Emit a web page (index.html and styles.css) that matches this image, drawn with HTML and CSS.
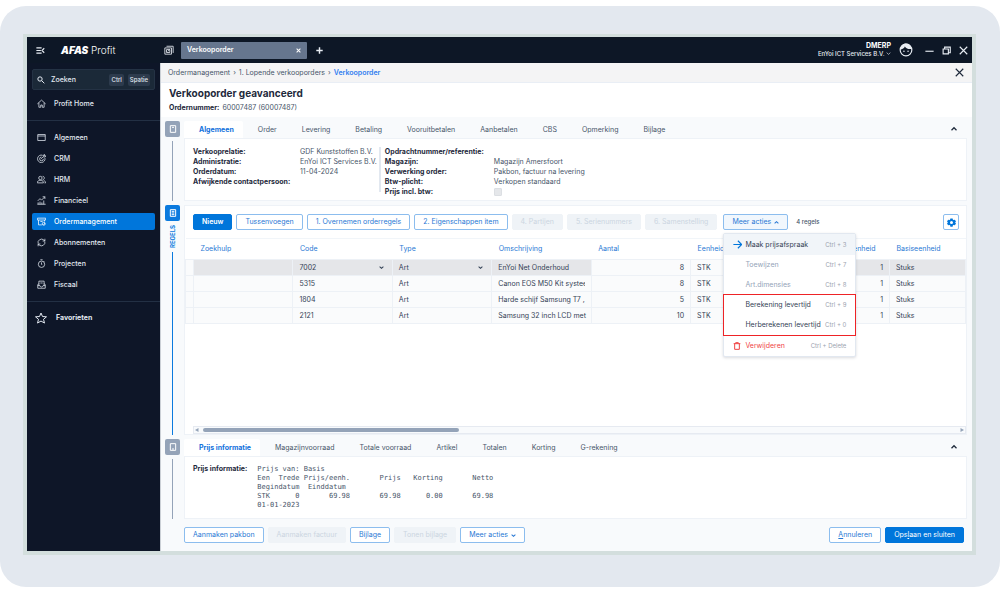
FILE: index.html
```html
<!DOCTYPE html>
<html lang="nl">
<head>
<meta charset="utf-8">
<meta name="viewport" content="width=device-width, initial-scale=1">
<title>AFAS Profit - Verkooporder</title>
<link rel="stylesheet" href="styles.css">
</head>
<body>
<div class="backdrop">
<div class="window">
  <header class="titlebar">
    <div class="brand">
      <button class="icon-btn" aria-label="Menu inklappen"><svg class="icon" viewBox="0 0 24 24"><path class="bold" d="M1 5h14M1 12h12M1 19h14M22 6l-6 6 6 6"/></svg></button>
      <span class="logo"><b>AFAS</b> Profit</span>
    </div>
    <button class="icon-btn pages" aria-label="Vensters"><svg class="icon icon-10" viewBox="0 0 24 24"><path d="M6 3h16v16M2 7h16v15H2zM6 11h8v7H6zM9 15l5-4"/></svg></button>
    <div class="doc-tab"><span>Verkooporder</span><button class="icon-btn" aria-label="Tabblad sluiten"><svg class="icon icon-5" viewBox="0 0 24 24"><path class="thick" d="M3 3l18 18M21 3L3 21"/></svg></button></div>
    <button class="icon-btn add" aria-label="Nieuw tabblad"><svg class="icon icon-7" viewBox="0 0 24 24"><path class="thick" d="M12 1v22M1 12h22"/></svg></button>
    <div class="account">
      <b>DMERP</b>
      <span>EnYoi ICT Services B.V. <svg class="icon icon-5" viewBox="0 0 24 24"><path class="bold" d="M3 8l9 8 9-8"/></svg></span>
    </div>
    <svg class="icon face" viewBox="0 0 24 24"><circle cx="12" cy="12" r="10"/><path class="solid" d="M2 11c4 0 7-2 8-5 3 4 7 5 12 4C21 4 17 1 12 1S2 5 2 11z"/><circle class="solid" cx="8.500" cy="14" r="1.300"/><circle class="solid" cx="15.500" cy="14" r="1.300"/></svg>
    <div class="window-controls">
      <button class="icon-btn" aria-label="Minimaliseren"><svg class="icon" viewBox="0 0 24 24"><path class="bold" d="M1 14h22"/></svg></button>
      <button class="icon-btn" aria-label="Herstellen"><svg class="icon" viewBox="0 0 24 24"><path class="bold" d="M7 7V3h15v15h-5M3 8h14v13H3z"/></svg></button>
      <button class="icon-btn" aria-label="Sluiten"><svg class="icon" viewBox="0 0 24 24"><path class="bold" d="M2 2l20 20M22 2L2 22"/></svg></button>
    </div>
  </header>

  <div class="workspace">
  <nav class="sidebar">
    <button class="search"><svg class="icon icon-8" viewBox="0 0 24 24"><circle class="bold" cx="9" cy="9" r="6.500"/><path class="bold" d="M14 14l8 8"/></svg><span>Zoeken</span><kbd>Ctrl</kbd><kbd>Spatie</kbd></button>
    <a class="nav-item" href="#"><svg class="icon" viewBox="0 0 24 24"><path d="M1 13L12 3l11 10M5 10v12h5v-6h4v6h5V10"/></svg>Profit Home</a>
    <hr>
    <a class="nav-item" href="#"><svg class="icon" viewBox="0 0 24 24"><path d="M2 4h20v16H2zM2 8h20"/></svg>Algemeen</a>
    <a class="nav-item" href="#"><svg class="icon" viewBox="0 0 24 24"><path d="M15 3.500A10 10 0 1 0 21 10M12 8a5 5 0 1 0 5 5M11 13l6-6V3l3-2v4h4l-3 3h-4"/></svg>CRM</a>
    <a class="nav-item" href="#"><svg class="icon" viewBox="0 0 24 24"><circle cx="9" cy="8" r="4.500"/><path d="M1 21v-2c0-6 16-6 16 0v2zM15 3.500c6 0 6 9 0 9M18 15c4 1 5 3 5 6h-3"/></svg>HRM</a>
    <a class="nav-item" href="#"><svg class="icon" viewBox="0 0 24 24"><path d="M2 13l6-6 4 4 9-9M15 2h6v6M3 22v-5M8 22v-7M13 22v-5M18 22V12M1 22h22"/></svg>Financieel</a>
    <a class="nav-item active" href="#"><svg class="icon" viewBox="0 0 24 24"><path d="M1 3h22v5H1zM4 8v13h9M20 8v4M9 12h6"/><circle cx="18" cy="18" r="4"/><path d="M16 18l2 2 3-4"/></svg>Ordermanagement</a>
    <a class="nav-item" href="#"><svg class="icon" viewBox="0 0 24 24"><path d="M3 15a9.500 9.500 0 0 1 15-10l3 3M21 2v6h-6M21 9.500A9.500 9.500 0 0 1 6 19l-3-3M3 22v-6h6"/></svg>Abonnementen</a>
    <a class="nav-item" href="#"><svg class="icon" viewBox="0 0 24 24"><circle cx="12" cy="14" r="8.500"/><path d="M9 2h6M12 9v5l2 2M18 6l2 2"/></svg>Projecten</a>
    <a class="nav-item" href="#"><svg class="icon" viewBox="0 0 24 24"><path d="M5 9L2 13v9h20v-9l-3-4M5 15V3h14v12M2 15h6c0 5 8 5 8 0h6M9 8h6"/></svg>Fiscaal</a>
    <hr>
    <a class="nav-item favorites" href="#"><svg class="icon icon-12" viewBox="0 0 24 24"><path d="M12 2l3 7 8 .6-6 5 2 7.500-7-4-7 4 2-7.500-6-5L9 9z"/></svg>Favorieten</a>
  </nav>

  <main class="main">
    <div class="breadcrumb">
      <a href="#">Ordermanagement</a><span>›</span><a href="#">1. Lopende verkooporders</a><span>›</span><b>Verkooporder</b>
      <button class="icon-btn close" aria-label="Pagina sluiten"><svg class="icon" viewBox="0 0 24 24"><path class="bold" d="M2 2l20 20M22 2L2 22"/></svg></button>
    </div>
    <div class="page-head">
      <h1>Verkooporder geavanceerd</h1>
      <p><b>Ordernummer:</b> 60007487 (60007487)</p>
    </div>

    <div class="sections">
    <section class="section">
      <div class="rail"><span class="rail-icon"><svg class="icon icon-8" viewBox="0 0 24 24"><path class="bold" d="M4 2h16v20H4zM9 7h6"/></svg></span><i></i></div>
      <div class="content">
        <div class="tabs"><button class="active">Algemeen</button><button>Order</button><button>Levering</button><button>Betaling</button><button>Vooruitbetalen</button><button>Aanbetalen</button><button>CBS</button><button>Opmerking</button><button>Bijlage</button><button class="collapse" aria-label="Inklappen"><svg class="icon icon-6" viewBox="0 0 24 24"><path class="thick" d="M2 17l10-10 10 10"/></svg></button></div>
        <div class="panel details">
          <dl>
            <dt>Verkooprelatie:</dt><dd>GDF Kunststoffen B.V.</dd>
            <dt>Administratie:</dt><dd>EnYoi ICT Services B.V.</dd>
            <dt>Orderdatum:</dt><dd>11-04-2024</dd>
            <dt>Afwijkende contactpersoon:</dt><dd></dd>
          </dl>
          <dl class="second">
            <dt>Opdrachtnummer/referentie:</dt><dd></dd>
            <dt>Magazijn:</dt><dd>Magazijn Amersfoort</dd>
            <dt>Verwerking order:</dt><dd>Pakbon, factuur na levering</dd>
            <dt>Btw-plicht:</dt><dd>Verkopen standaard</dd>
            <dt><label for="btw">Prijs incl. btw:</label></dt><dd><input id="btw" type="checkbox" disabled></dd>
          </dl>
        </div>
      </div>
    </section>

    <section class="section grow blue">
      <div class="rail"><span class="rail-icon"><svg class="icon icon-8" viewBox="0 0 24 24"><path class="bold" d="M4 2h16v20H4zM8 7h8M8 12h8M8 17h8"/></svg></span><em>REGELS</em><i></i></div>
      <div class="content panel lines">
        <div class="toolbar">
          <button class="btn primary">Nieuw</button>
          <button class="btn">Tussenvoegen</button>
          <button class="btn">1. Overnemen orderregels</button>
          <button class="btn">2. Eigenschappen item</button>
          <button class="btn" disabled>4. Partijen</button>
          <button class="btn" disabled>5. Serienummers</button>
          <button class="btn" disabled>6. Samenstelling</button>
          <div class="dropdown">
            <button class="btn open" aria-expanded="true">Meer acties <svg class="icon icon-5" viewBox="0 0 24 24"><path class="thick" d="M3 16l9-8 9 8"/></svg></button>
            <div class="menu" role="menu">
              <button role="menuitem" class="current"><svg class="icon" viewBox="0 0 24 24"><path class="bold" d="M1 12h21M13 2l10 10-10 10"/></svg><span>Maak prijsafspraak</span><small>Ctrl + 3</small></button>
              <button role="menuitem" disabled><span>Toewijzen</span><small>Ctrl + 7</small></button>
              <button role="menuitem" disabled><span>Art.dimensies</span><small>Ctrl + 8</small></button>
              <div class="marked">
                <button role="menuitem"><span>Berekening levertijd</span><small>Ctrl + 9</small></button>
                <button role="menuitem"><span>Herberekenen levertijd</span><small>Ctrl + 0</small></button>
              </div>
              <button role="menuitem" class="danger"><svg class="icon icon-8" viewBox="0 0 24 24"><path class="bold" d="M2 5h20M8 4V2h8v2M5 5v17h14V5"/></svg><span>Verwijderen</span><small>Ctrl + Delete</small></button>
            </div>
          </div>
          <span class="count">4 regels</span>
          <button class="btn gear" aria-label="Instellingen"><svg class="icon" viewBox="0 0 24 24"><path class="solid" fill-rule="evenodd" d="M9 1h6l.8 3.400 2 1.200L21 4.500l3 5-2.500 2.500L24 14.500l-3 5-3.200-1.100-2 1.200L15 23H9l-.8-3.400-2-1.200L3 19.500l-3-5L2.500 12 0 9.500l3-5 3.200 1.100 2-1.200zM12 8a4 4 0 1 0 0 8 4 4 0 0 0 0-8z"/></svg></button>
        </div>
        <table>
          <colgroup><col class="c-gutter"><col span="7"><col class="c-last"></colgroup>
          <thead><tr><th></th><th>Zoekhulp</th><th>Code</th><th>Type</th><th>Omschrijving</th><th>Aantal</th><th>Eenheid</th><th class="end">Eenheid</th><th>Basiseenheid</th></tr></thead>
          <tbody>
            <tr class="selected"><td></td><td></td><td><div class="pick">7002<svg class="icon icon-5" viewBox="0 0 24 24"><path class="thick" d="M3 8l9 8 9-8"/></svg></div></td><td><div class="pick">Art<svg class="icon icon-5" viewBox="0 0 24 24"><path class="thick" d="M3 8l9 8 9-8"/></svg></div></td><td>EnYoi Net Onderhoud</td><td class="num plain">8</td><td class="plain">STK</td><td class="num">1</td><td>Stuks</td></tr>
            <tr><td></td><td></td><td>5315</td><td>Art</td><td><div class="clip">Canon EOS M50 Kit systeem</div></td><td class="num">8</td><td>STK</td><td class="num">1</td><td>Stuks</td></tr>
            <tr><td></td><td></td><td>1804</td><td>Art</td><td><div class="clip">Harde schijf Samsung T7 ,</div></td><td class="num">5</td><td>STK</td><td class="num">1</td><td>Stuks</td></tr>
            <tr><td></td><td></td><td>2121</td><td>Art</td><td>Samsung 32 inch LCD met</td><td class="num">10</td><td>STK</td><td class="num">1</td><td>Stuks</td></tr>
          </tbody>
        </table>
        <div class="scrollbar"><svg class="icon arrow" viewBox="0 0 8 8"><path class="solid" d="M7 0v8L0 4z"/></svg><div class="track"><div class="thumb"></div></div><svg class="icon arrow" viewBox="0 0 8 8"><path class="solid" d="M1 0v8l7-4z"/></svg></div>
      </div>
    </section>

    <section class="section">
      <div class="rail"><span class="rail-icon"><svg class="icon icon-8" viewBox="0 0 24 24"><path class="bold" d="M4 2h16v20H4zM9 18h6"/></svg></span><i></i></div>
      <div class="content">
        <div class="tabs"><button class="active">Prijs informatie</button><button>Magazijnvoorraad</button><button>Totale voorraad</button><button>Artikel</button><button>Totalen</button><button>Korting</button><button>G-rekening</button><button class="collapse" aria-label="Inklappen"><svg class="icon icon-6" viewBox="0 0 24 24"><path class="thick" d="M2 17l10-10 10 10"/></svg></button></div>
        <div class="panel price">
          <b>Prijs informatie:</b>
<pre>Prijs van: Basis
Een  Trede Prijs/eenh.       Prijs   Korting       Netto
Begindatum  Einddatum
STK      0       69.98       69.98      0.00       69.98
01-01-2023</pre>
        </div>
      </div>
    </section>
    </div>

    <footer class="actions">
      <button class="btn">Aanmaken pakbon</button>
      <button class="btn" disabled>Aanmaken factuur</button>
      <button class="btn">Bijlage</button>
      <button class="btn" disabled>Tonen bijlage</button>
      <button class="btn">Meer acties <svg class="icon icon-5" viewBox="0 0 24 24"><path class="thick" d="M3 8l9 8 9-8"/></svg></button>
      <button class="btn push"><span><u>A</u>nnuleren</span></button>
      <button class="btn primary"><span>Ops<u>l</u>aan en sluiten</span></button>
    </footer>
  </main>
  </div>
</div>
</div>
</body>
</html>
```

FILE: styles.css
```css
* { box-sizing: border-box; }

body {
  margin: 0;
  padding: 6px 0;
  background: #fff;
  color: #475569;
  font: 7px/10px Inter, "Liberation Sans", sans-serif;
}

button, input { font: inherit; color: inherit; margin: 0; }
button { border: 0; background: none; padding: 0; white-space: nowrap; }
a { color: inherit; text-decoration: none; }

.backdrop {
  display: flex;
  min-height: calc(100vh - 12px);
  padding: 28px 24px 32px 23px;
  border-radius: 26px;
  background: #e3e8ef;
}

.window {
  flex: 1;
  min-width: 0;
  display: flex;
  flex-direction: column;
  border: 4px solid #d3dedd;
  border-top-width: 3px;
}

/* Icons */
.icon {
  width: 9px;
  height: 9px;
  flex: none;
  fill: none;
  stroke: currentColor;
  stroke-width: 2;
}
.icon-5 { width: 5px; height: 5px; }
.icon-6 { width: 6px; height: 6px; }
.icon-7 { width: 7px; height: 7px; }
.icon-8 { width: 8px; height: 8px; }
.icon-10 { width: 10px; height: 10px; }
.icon-12 { width: 12px; height: 12px; }
.bold { stroke-width: 3; }
.thick { stroke-width: 5; }
.solid { fill: currentColor; stroke: none; }
.icon-btn { display: flex; align-items: center; }

/* Title bar */
.titlebar {
  display: flex;
  align-items: center;
  height: 26px;
  padding-right: 4px;
  background: #0d1726;
  color: #e8edf3;
}
.brand { display: flex; align-items: center; gap: 16px; width: 133px; padding-left: 9px; }
.logo { font-size: 10px; line-height: 12px; font-weight: 300; color: #fff; }
.logo b { font-style: italic; font-weight: 900; }
.pages { padding: 0 7px 0 4px; }
.doc-tab {
  display: flex;
  align-items: center;
  justify-content: space-between;
  width: 126px;
  height: 17px;
  padding: 0 6px;
  border-radius: 1px;
  background: #66768e;
  color: #fff;
  font-weight: 600;
}
.add { padding-left: 9px; }
.account { margin-left: auto; text-align: right; font-size: 6px; line-height: 8px; font-weight: 500; }
.account b { display: block; font-size: 7px; font-weight: 700; color: #fff; }
.face { width: 14px; height: 14px; margin: 0 12px 0 8px; }
.window-controls { display: flex; gap: 8px; }

/* Sidebar */
.workspace { flex: 1; display: flex; min-height: 0; }
.sidebar {
  flex: none;
  width: 133px;
  padding: 6px 5px;
  background: #0e1628;
  color: #e2e8f0;
  font-weight: 500;
}
.search {
  display: flex;
  align-items: center;
  gap: 4px;
  width: 100%;
  height: 21px;
  margin-bottom: 5px;
  padding: 0 4px;
  border: 1px solid #243244;
  border-radius: 2px;
  background: #1b2938;
  font-weight: 500;
}
.search span { flex: 1; padding-left: 2px; text-align: left; }
kbd {
  padding: 1px 2px;
  border-radius: 2px;
  background: #2d3b4d;
  font: 500 6px/10px Inter, "Liberation Sans", sans-serif;
}
.nav-item {
  display: flex;
  align-items: center;
  gap: 8px;
  height: 17px;
  margin-bottom: 4px;
  padding-left: 5px;
  border-radius: 2px;
}
.nav-item.active { background: #0076db; color: #fff; }
.nav-item.favorites { gap: 9px; height: 15px; padding-left: 3px; font-weight: 700; }
.sidebar hr { margin: 8px -5px; border: 0; border-top: 1px solid #233044; }

/* Main area */
.main {
  flex: 1;
  min-width: 0;
  display: flex;
  flex-direction: column;
  border-left: 1px solid #cbd0d6;
  background: #f8fafc;
}
.breadcrumb {
  display: flex;
  align-items: center;
  gap: 3px;
  height: 20px;
  padding: 0 8px 0 7px;
  border-bottom: 1px solid #e9eef5;
  background: #f4f4f5;
}
.breadcrumb b { color: #2f7df0; font-weight: 600; }
.breadcrumb .close { margin-left: auto; color: #1e293b; }
.page-head { padding: 4px 8px; background: #fff; height: 34px; }
h1 { margin: 0; font-size: 10px; line-height: 13px; font-weight: 700; color: #1e293b; }
.page-head p { margin: 3px 0 0; }
.page-head b, dt, .price b { color: #1e293b; font-weight: 700; }
.page-head b { margin-right: 1px; }

.sections { flex: 1; display: flex; flex-direction: column; gap: 4px; padding: 4px 5px 0 4px; }
.section { display: grid; grid-template-columns: 15px minmax(0, 1fr); gap: 4px; }
.section.grow { flex: 1; }

.rail { display: flex; flex-direction: column; align-items: center; gap: 4px; color: #94a3b8; }
.rail-icon {
  display: grid;
  place-items: center;
  width: 15px;
  height: 16px;
  border-radius: 2px;
  background: currentColor;
}
.rail-icon .icon { stroke: #fff; }
.rail i { flex: 1; width: 1px; background: currentColor; }
.rail em {
  writing-mode: vertical-rl;
  transform: rotate(180deg);
  font-size: 6px;
  line-height: 8px;
  font-style: normal;
  font-weight: 700;
}
.blue .rail { color: #0b7ade; }

.tabs { display: flex; height: 17px; }
.tabs button { padding: 0 12px 0 13px; }
.tabs .active {
  padding: 0 9px 0 15px;
  margin-right: 2px;
  border-radius: 2px 2px 0 0;
  background: #fff;
  color: #1271dc;
  font-weight: 700;
}
.tabs .collapse { margin-left: auto; padding: 0 10px; color: #1e293b; }

.panel { background: #fff; border: 1px solid #eef2f7; }

.details { display: flex; padding: 8px; height: 63px; }
dl { display: grid; grid-template-columns: 107px auto; grid-auto-rows: 10px; align-content: start; margin: 0; }
dl.second { grid-template-columns: 109px auto; margin-left: 2px; padding-left: 4px; border-left: 2px solid #e2e8f0; }
dt, dd { margin: 0; white-space: nowrap; }
dd input {
  display: block;
  appearance: none;
  width: 8px;
  height: 8px;
  margin: 1px 0 0;
  border: 1px solid #dcdfe3;
  border-radius: 1px;
  background: #e5e7ea;
}

/* Buttons */
.btn {
  display: flex;
  align-items: center;
  gap: 3px;
  height: 16px;
  padding: 0 8px;
  border: 1px solid #8cbdee;
  border-radius: 2px;
  background: #fff;
  color: #2878d4;
}
.btn.primary { border-color: #0076db; background: #0076db; color: #fff; }
.btn.open { background: #f1f7fd; }
.btn:disabled { border-color: #eff3f7; background: #eff3f7; color: #cbd5e1; }
.btn u { text-underline-offset: 1px; }

/* Order lines */
.lines { display: flex; flex-direction: column; }
.toolbar { display: flex; align-items: center; gap: 4px; padding: 8px 7px 8px 8px; }
.toolbar .primary { font-weight: 600; }
.count { margin-left: 4px; font-size: 6px; font-weight: 500; }
.gear { margin-left: auto; padding: 0; width: 16px; justify-content: center; color: #0076db; }

.dropdown { position: relative; margin-left: 2px; }
.menu {
  position: absolute;
  z-index: 1;
  top: 19px;
  left: 0;
  width: 133px;
  border: 1px solid #e2e8f0;
  border-radius: 2px;
  background: #fff;
  box-shadow: 0 1px 3px #0f172a26;
}
.menu button {
  display: grid;
  grid-template-columns: 9px 1fr auto;
  gap: 3px;
  align-items: center;
  width: 100%;
  height: 20px;
  padding: 0 9px;
  text-align: left;
  color: #334155;
}
.menu span { grid-column: 2; }
.menu small { font-size: 6px; color: #9ca3af; }
.menu .current { height: 21px; background: #f1f5f9; }
.menu .current .icon { color: #0076db; }
.menu button:disabled { color: #94a3b8; }
.menu .danger { height: 21px; color: #ef4444; }
.marked { outline: 1px solid #ee2326; }

table { width: 100%; table-layout: fixed; border-collapse: collapse; border-top: 1px solid #f1f5f9; }
.c-gutter { width: 8px; }
.c-last { width: 76px; }
th { height: 21px; padding: 0 6px 0 7px; text-align: left; font-weight: 400; color: #2878d4; }
th.end { text-align: right; padding-right: 14px; }
td {
  height: 16px;
  padding: 0 6px;
  border: 1px solid #edf1f6;
  background: #fafbfc;
  white-space: nowrap;
  color: #334155;
}
.num { text-align: right; }
.selected td { background: #e5e6e9; }
.selected td:first-child, .selected .plain { background: #fafbfc; }
.pick { display: flex; align-items: center; justify-content: space-between; padding-right: 2px; }
.clip { overflow: hidden; }

.scrollbar {
  display: flex;
  align-items: center;
  gap: 4px;
  height: 8px;
  margin: auto 0 0 8px;
  padding: 0 1px;
  border: 1px solid #e6eaf1;
  background: #f8fafc;
  color: #94a3b8;
}
.scrollbar .arrow { width: 4px; height: 4px; }
.track { flex: 1; }
.thumb { width: 34%; height: 4px; border-radius: 2px; background: #94a3b8; }

.price { display: flex; gap: 10px; height: 63px; padding: 7px 8px; }
.price pre { margin: 0; font: 7px/9px "DejaVu Sans Mono", monospace; padding-top: 1px; }

.actions { display: flex; gap: 4px; padding: 8px 8px 8px 23px; }
.actions .push { margin-left: auto; }
```
